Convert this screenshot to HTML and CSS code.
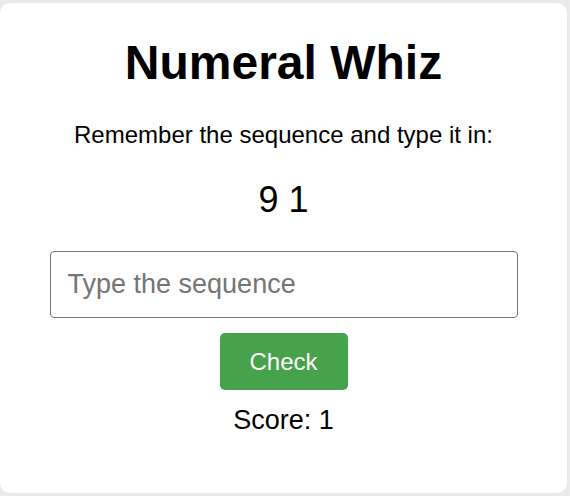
FILE: index.html
```html
<!DOCTYPE html>
<html>
<head>
<meta charset="utf-8">
<link rel="stylesheet" href="styles.css">
</head>
<body>
<div class="card">
  <h1 class="title">Numeral Whiz</h1>
  <p class="prompt">Remember the sequence and type it in:</p>
  <div class="sequence">9 1</div>
  <input class="answer" type="text" placeholder="Type the sequence">
  <button class="check">Check</button>
  <div class="score">Score: 1</div>
</div>
</body>
</html>
```
FILE: styles.css
```css
html, body {
  margin: 0;
  padding: 0;
}
body {
  background: #e9e9e9;
  font-family: "Liberation Sans", Arial, sans-serif;
  padding: 3px 3px 3px 0;
  height: 496px;
  box-sizing: border-box;
}
.card {
  background: #fff;
  border-radius: 10px;
  height: 490px;
  box-sizing: border-box;
  padding: 32px 20px 20px;
  display: flex;
  flex-direction: column;
  align-items: center;
  color: #000;
}
.title {
  font-size: 48px;
  font-weight: bold;
  margin: 0;
  line-height: 55px;
}
.prompt {
  font-size: 24px;
  margin: 31px 0 0;
  line-height: 28px;
}
.sequence {
  font-size: 36px;
  margin: 30px 0 0;
  line-height: 41px;
}
.answer {
  margin-top: 31px;
  width: 468px;
  height: 67px;
  box-sizing: border-box;
  border: 1px solid #767676;
  border-radius: 4px;
  padding: 0 17px;
  font-family: "Liberation Sans", Arial, sans-serif;
  font-size: 27px;
  color: #000;
  outline: none;
}
.answer::placeholder {
  color: #757575;
}
.check {
  margin-top: 15px;
  width: 128px;
  height: 57px;
  border: none;
  border-radius: 5px;
  background: #46a34b;
  color: #fff;
  font-family: "Liberation Sans", Arial, sans-serif;
  font-size: 24px;
}
.score {
  margin-top: 15px;
  font-size: 27px;
  line-height: 31px;
}
```
